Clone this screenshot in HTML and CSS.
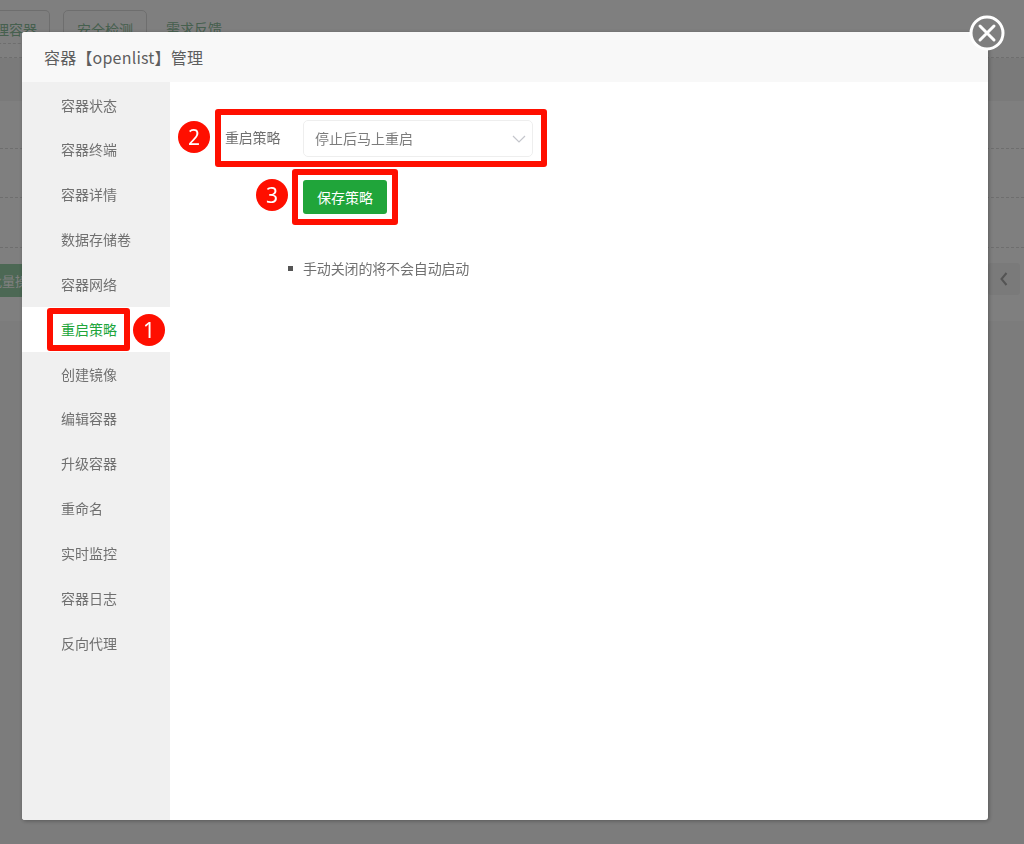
FILE: index.html
```html
<!DOCTYPE html>
<html lang="zh-CN">
<head>
    <meta charset="UTF-8">
    <meta name="viewport" content="width=device-width, initial-scale=1.0">
    <title>容器管理</title>
    <link rel="stylesheet" href="styles.css">
</head>
<body>

    <!-- 背景页面 -->
    <div class="page">
        <div class="tabs">
            <div class="tab tab-first">理容器</div>
            <div class="tab">安全检测</div>
            <div class="tab tab-plain">需求反馈</div>
        </div>
        <div class="page-row row-a"></div>
        <div class="page-row row-b"></div>
        <div class="page-row row-c"></div>
        <div class="page-row row-d"></div>
        <div class="page-row row-e">
            <div class="page-btn">批量操作</div>
            <div class="page-arrow">
                <svg width="10" height="16" viewBox="0 0 10 16"><path d="M7.5 2 L2.5 8 L7.5 14" fill="none" stroke="#a8a8a8" stroke-width="2"/></svg>
            </div>
        </div>
        <div class="page-foot"></div>
    </div>

    <div class="shade"></div>

    <!-- 弹窗 -->
    <div class="modal">
        <div class="modal-title">容器【openlist】管理</div>
        <div class="close-btn">
            <svg width="36" height="36" viewBox="0 0 36 36">
                <circle cx="18" cy="18" r="16" fill="#7f7f7f" stroke="#fff" stroke-width="3"/>
                <path d="M11 11 L25 25 M25 11 L11 25" stroke="#fff" stroke-width="3" stroke-linecap="round"/>
            </svg>
        </div>
        <div class="modal-body">
            <ul class="side-menu">
                <li>容器状态</li>
                <li>容器终端</li>
                <li>容器详情</li>
                <li>数据存储卷</li>
                <li>容器网络</li>
                <li class="active">
                    重启策略
                    <span class="mark mark-menu"></span>
                    <span class="badge badge-menu">1</span>
                </li>
                <li>创建镜像</li>
                <li>编辑容器</li>
                <li>升级容器</li>
                <li>重命名</li>
                <li>实时监控</li>
                <li>容器日志</li>
                <li>反向代理</li>
            </ul>
            <div class="content">
                <div class="form-row">
                    <span class="mark mark-form"></span>
                    <span class="badge badge-form">2</span>
                    <label class="form-label">重启策略</label>
                    <div class="select">
                        <span class="select-value">停止后马上重启</span>
                        <svg width="14" height="8" viewBox="0 0 14 8"><path d="M1 1 L7 7 L13 1" fill="none" stroke="#c4c6cc" stroke-width="1.2"/></svg>
                    </div>
                </div>
                <div class="save-row">
                    <span class="mark mark-save"></span>
                    <span class="badge badge-save">3</span>
                    <button class="save-btn">保存策略</button>
                </div>
                <ul class="tips">
                    <li>手动关闭的将不会自动启动</li>
                </ul>
            </div>
        </div>
    </div>

</body>
</html>
```

FILE: styles.css
```css
/* 基础 */
html, body {
    margin: 0;
    padding: 0;
    height: 844px;
    overflow: hidden;
}

body {
    font-family: "Noto Sans CJK SC", "Noto Sans", sans-serif;
    font-size: 14px;
    color: #707070;
    background-color: #fff;
}

/* 背景页面 */
.page {
    height: 844px;
}

.tabs {
    display: flex;
    align-items: flex-start;
    gap: 13px;
    height: 58px;
    padding-top: 10px;
    margin-left: -36px;
    box-sizing: border-box;
    border-bottom: 1px dashed #ddd;
}

.tab {
    width: 84px;
    height: 34px;
    line-height: 36px;
    text-align: center;
    color: #8cc09c;
    border: 1px solid #ddd;
    border-radius: 5px 5px 0 0;
    box-sizing: border-box;
}

.tab-first {
    width: 86px;
    padding-right: 12px;
    text-align: right;
    border-bottom: 1px dashed #ddd;
}

.tab-plain {
    width: 68px;
    border: none;
}

.page-row {
    box-sizing: border-box;
}

.row-a {
    height: 43px;
    background-color: #f4f4f4;
}

.row-b { height: 48px; border-bottom: 1px dashed #ddd; }
.row-c { height: 49px; border-bottom: 1px dashed #ddd; }
.row-d { height: 50px; border-bottom: 1px dashed #ddd; }

.row-e {
    display: flex;
    justify-content: space-between;
    align-items: flex-start;
    height: 73px;
    padding-top: 15px;
}

.page-btn {
    width: 70px;
    height: 33px;
    margin-top: 1px;
    margin-left: -11px;
    line-height: 33px;
    white-space: nowrap;
    color: #fff;
    font-size: 13px;
    background-color: #98d0a8;
}

.page-arrow {
    display: flex;
    align-items: center;
    justify-content: center;
    width: 32px;
    height: 32px;
    margin-right: 4px;
    border-radius: 3px;
    background-color: #f4f4f4;
}

.page-foot {
    height: 524px;
    background-color: #f8f8f8;
}

.shade {
    position: fixed;
    inset: 0;
    background-color: rgba(0, 0, 0, 0.5);
}

/* 弹窗 */
.modal {
    position: fixed;
    left: 22px;
    top: 32px;
    width: 966px;
    height: 788px;
    display: flex;
    flex-direction: column;
    background-color: #fff;
    border-radius: 3px;
    box-shadow: 1px 1px 4px rgba(0, 0, 0, 0.3);
}

.modal-title {
    height: 50px;
    line-height: 50px;
    padding-left: 22px;
    font-size: 16px;
    letter-spacing: 0.2px;
    color: #5e5e5e;
    background-color: #f8f8f8;
    border-radius: 3px 3px 0 0;
    flex-shrink: 0;
}

.close-btn {
    position: absolute;
    top: -17px;
    right: -17px;
    width: 36px;
    height: 36px;
}

.modal-body {
    display: flex;
    flex: 1;
}

/* 左侧菜单 */
.side-menu {
    width: 148px;
    margin: 0;
    padding: 0.6px 0 0;
    list-style: none;
    background-color: #f0f0f0;
    border-radius: 0 0 0 3px;
    flex-shrink: 0;
}

.side-menu li {
    position: relative;
    height: 44.83px;
    line-height: 44px;
    padding-left: 39px;
}

.side-menu li.active {
    color: #20a53a;
    background-color: #fff;
}

/* 右侧内容 */
.content {
    flex: 1;
    padding: 38px 0 0 55px;
}

.form-row {
    position: relative;
    display: flex;
    align-items: center;
    height: 37px;
}

.form-label {
    width: 78px;
    padding-bottom: 3px;
    letter-spacing: -0.2px;
}

.select {
    display: flex;
    align-items: center;
    justify-content: space-between;
    width: 230px;
    height: 37px;
    padding: 0 6px 0 11px;
    box-sizing: border-box;
    border: 1px solid #eee;
    border-radius: 5px;
    color: #7c7c7c;
}

.select-value {
    padding-bottom: 2px;
}

.save-row {
    position: relative;
    margin: 23px 0 0 78px;
    height: 34px;
}

.save-btn {
    display: block;
    width: 84px;
    height: 34px;
    padding: 0;
    border: none;
    border-radius: 3px;
    color: #fff;
    font-family: inherit;
    font-size: 14px;
    background-color: #20a53a;
}

.tips {
    margin: 42px 0 0 78px;
    padding: 0;
    list-style: none;
}

.tips li {
    position: relative;
    line-height: 24px;
    letter-spacing: -0.15px;
}

.tips li::before {
    content: "";
    position: absolute;
    left: -15px;
    top: 10px;
    width: 5px;
    height: 5px;
    background-color: #555;
}

/* 红色标注 */
.mark {
    position: absolute;
    box-sizing: border-box;
    border: 6px solid #ff0f00;
    border-radius: 3px;
}

.mark-menu {
    left: 25px;
    top: 1px;
    width: 83px;
    height: 43px;
}

.mark-form {
    left: -10px;
    top: -11px;
    width: 332px;
    height: 58px;
}

.mark-save {
    left: -11px;
    top: -11px;
    width: 106px;
    height: 56px;
}

.badge {
    position: absolute;
    width: 32px;
    height: 32px;
    line-height: 32px;
    text-align: center;
    border-radius: 50%;
    color: #fff;
    font-family: "Noto Sans", sans-serif;
    font-size: 21px;
    background-color: #ff0f00;
}

.badge-menu {
    left: 111px;
    top: 7px;
}

.badge-form {
    left: -47px;
    top: 1px;
}

.badge-save {
    left: -47px;
    top: -1px;
}
```
